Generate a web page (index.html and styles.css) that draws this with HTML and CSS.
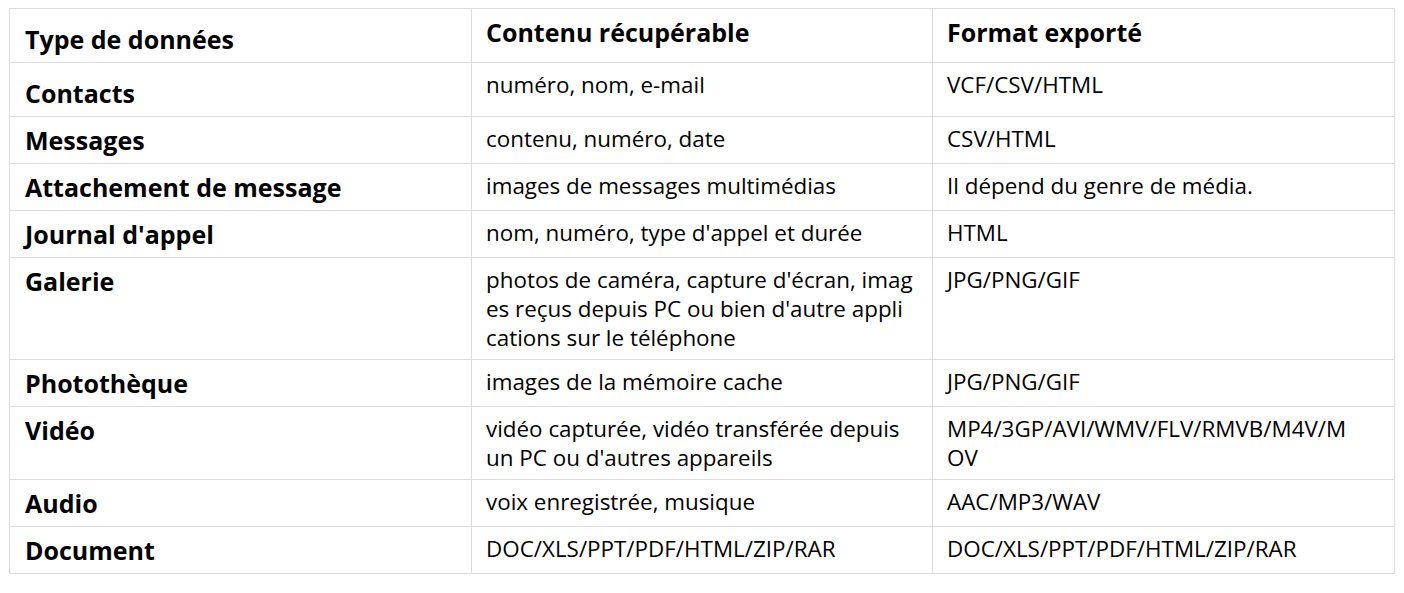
FILE: index.html
```html
<!DOCTYPE html>
<html lang="fr">
<head>
<meta charset="utf-8">
<title>Types de données</title>
<link rel="stylesheet" href="styles.css">
</head>
<body>
<table class="data-table">
  <colgroup>
    <col class="col-a"><col class="col-b"><col class="col-c">
  </colgroup>
  <tr class="row-tall">
    <td class="type">Type de données</td>
    <th class="content">Contenu récupérable</th>
    <th class="format">Format exporté</th>
  </tr>
  <tr class="row-tall">
    <td class="type">Contacts</td>
    <td class="content">numéro, nom, e-mail</td>
    <td class="format">VCF/CSV/HTML</td>
  </tr>
  <tr>
    <td class="type">Messages</td>
    <td class="content">contenu, numéro, date</td>
    <td class="format">CSV/HTML</td>
  </tr>
  <tr>
    <td class="type">Attachement de message</td>
    <td class="content">images de messages multimédias</td>
    <td class="format">Il dépend du genre de média.</td>
  </tr>
  <tr>
    <td class="type">Journal d'appel</td>
    <td class="content">nom, numéro, type d'appel et durée</td>
    <td class="format">HTML</td>
  </tr>
  <tr>
    <td class="type">Galerie</td>
    <td class="content">photos de caméra, capture d'écran, images reçus depuis PC ou bien d'autre applications sur le téléphone</td>
    <td class="format">JPG/PNG/GIF</td>
  </tr>
  <tr>
    <td class="type">Photothèque</td>
    <td class="content">images de la mémoire cache</td>
    <td class="format">JPG/PNG/GIF</td>
  </tr>
  <tr>
    <td class="type">Vidéo</td>
    <td class="content">vidéo capturée, vidéo transférée depuis un PC ou d'autres appareils</td>
    <td class="format">MP4/3GP/AVI/WMV/FLV/RMVB/M4V/MOV</td>
  </tr>
  <tr>
    <td class="type">Audio</td>
    <td class="content">voix enregistrée, musique</td>
    <td class="format">AAC/MP3/WAV</td>
  </tr>
  <tr>
    <td class="type">Document</td>
    <td class="content">DOC/XLS/PPT/PDF/HTML/ZIP/RAR</td>
    <td class="format">DOC/XLS/PPT/PDF/HTML/ZIP/RAR</td>
  </tr>
</table>
</body>
</html>
```
FILE: styles.css
```css
html, body {
  background: #ffffff;
}
body {
  margin: 8px 9px;
  font-family: "Open Sans", "Noto Sans", sans-serif;
  color: #000;
}
.data-table {
  width: 1386px;
  border-collapse: collapse;
  table-layout: fixed;
}
.col-a { width: 462px; }
.col-b { width: 461px; }
.data-table td,
.data-table th {
  border: 1px solid #dddddd;
  padding: 7px 19px 7px 14px;
  vertical-align: top;
  text-align: left;
  font-size: 22.4px;
  line-height: 29px;
  font-weight: 400;
  word-break: break-all;
}
.data-table .format {
  padding-right: 40px;
}
.data-table th {
  font-weight: 700;
  font-size: 25px;
  line-height: 32px;
  padding-top: 7px;
  padding-bottom: 7px;
}
.data-table td.type {
  font-weight: 700;
  font-size: 25px;
  line-height: 32px;
  padding: 7px 15px 7px 15px;
}
.row-tall td.type {
  padding-top: 14px;
}
```
